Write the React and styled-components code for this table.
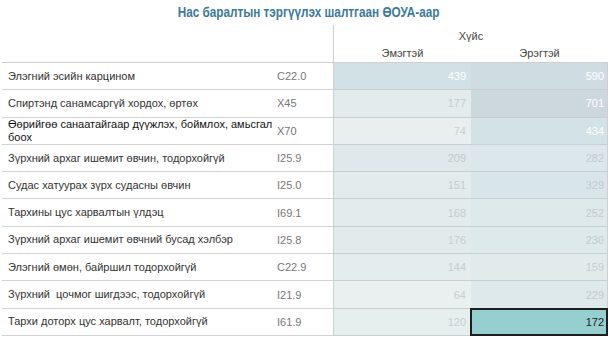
import React from "react";
import styled, { createGlobalStyle } from "styled-components";

const Global = createGlobalStyle`
  html, body { margin: 0; padding: 0; background: #fff; }
  body { font-family: "Liberation Sans", Arial, sans-serif; }
`;

const Page = styled.div`
  width: 611px;
  height: 338px;
  overflow: hidden;
  display: flex;
  flex-direction: column;
  padding-left: 2px;
  box-sizing: border-box;
`;

const Title = styled.div`
  height: 25px;
  display: flex;
  align-items: center;
  justify-content: center;
  padding-left: 4px;
  padding-bottom: 2px;
  box-sizing: border-box;
`;

const TitleText = styled.span`
  display: inline-block;
  font-weight: bold;
  font-size: 14.5px;
  color: #3d7a98;
  transform: scaleX(0.81);
  white-space: nowrap;
`;

const Table = styled.div`
  display: grid;
  grid-template-columns: 272px 59px 138px 137px;
  grid-template-rows: 19px 19px repeat(10, 27.3px);
  width: 606px;
  font-size: 11px;
  color: #333;
`;

const HeadBlank = styled.div`
  grid-column: 1 / 3;
  grid-row: 1 / 3;
  border-bottom: 1px solid #cfcfcf;
`;

const HeadGroup = styled.div`
  grid-column: 3 / 5;
  grid-row: 1;
  border-left: 1px solid #cfcfcf;
  display: flex;
  align-items: center;
  justify-content: center;
  padding-top: 2px;
  color: #444;
`;

const HeadCell = styled.div`
  border-left: ${(p) => (p.$first ? "1px solid #cfcfcf" : "none")};
  border-bottom: 1px solid #cfcfcf;
  display: flex;
  align-items: center;
  justify-content: center;
  color: #444;
  padding-bottom: 1px;
`;

const NameCell = styled.div`
  border-bottom: 1px solid #d3d3d3;
  display: flex;
  align-items: center;
  padding-left: 6px;
  line-height: 13px;
  color: ${(p) => (p.$dark ? "#111" : "#333")};
`;

const CodeCell = styled.div`
  border-bottom: 1px solid #d3d3d3;
  display: flex;
  align-items: center;
  padding-left: 3px;
  color: #777;
`;

const ValueCell = styled.div`
  position: relative;
  border-bottom: 1px solid #c9cfd1;
  border-left: ${(p) => (p.$first ? "1px solid #d0d0d0" : "none")};
  border-right: ${(p) => (p.$last ? "1px solid #d0d0d0" : "none")};
  background: ${(p) => p.$bg};
  color: ${(p) => p.$fg};
  display: flex;
  align-items: center;
  justify-content: flex-end;
  padding-right: ${(p) => (p.$last ? "3px" : "5px")};
`;

const Selected = styled.div`
  position: absolute;
  inset: -1px -1px -1px -1px;
  border: 2px solid #1e1e1e;
  background: #96cfcf;
  color: #222;
  display: flex;
  align-items: center;
  justify-content: flex-end;
  padding-right: 2px;
`;

const rows = [
  { name: "Элэгний эсийн карцином", code: "C22.0", f: [439, "#d1e1e6", "#fff"], m: [590, "#cfdde3", "#fff"] },
  { name: "Спиртэнд санамсаргүй хордох, өртөх", code: "X45", f: [177, "#e3ebec", "#c6cdcf"], m: [701, "#cdd7de", "#fff"] },
  { name: "Өөрийгөө санаатайгаар дүүжлэх, боймлох, амьсгал боох", code: "X70", dark: true, f: [74, "#e9efee", "#c9cfd0"], m: [434, "#d2e2e7", "#fff"] },
  { name: "Зүрхний архаг ишемит өвчин, тодорхойгүй", code: "I25.9", f: [209, "#dfe9eb", "#c3cbcd"], m: [282, "#dbe7ea", "#c3cbcd"] },
  { name: "Судас хатуурах зүрх судасны өвчин", code: "I25.0", f: [151, "#e3ebec", "#c6cdcf"], m: [329, "#d8e6ea", "#c3cbcd"] },
  { name: "Тархины цус харвалтын үлдэц", code: "I69.1", f: [168, "#e3ebec", "#c6cdcf"], m: [252, "#dde9eb", "#c3cbcd"] },
  { name: "Зүрхний архаг ишемит өвчний бусад хэлбэр", code: "I25.8", f: [176, "#e2eaec", "#c6cdcf"], m: [230, "#dde9eb", "#c3cbcd"] },
  { name: "Элэгний өмөн, байршил тодорхойгүй", code: "C22.9", f: [144, "#e4eced", "#c6cdcf"], m: [159, "#e2ebec", "#c6cdcf"] },
  { name: "Зүрхний  цочмог шигдээс, тодорхойгүй", code: "I21.9", f: [64, "#eaf0ef", "#c9cfd0"], m: [229, "#dde9eb", "#c3cbcd"] },
  { name: "Тархи доторх цус харвалт, тодорхойгүй", code: "I61.9", f: [120, "#e6eeee", "#c9cfd0"], m: [172, "#96cfcf", "#222"], sel: true },
];

export default function App() {
  return (
    <>
      <Global />
      <Page>
        <Title>
          <TitleText>Нас баралтын тэргүүлэх шалтгаан ӨОУА-аар</TitleText>
        </Title>
        <Table>
          <HeadBlank />
          <HeadGroup>Хүйс</HeadGroup>
          <HeadCell $first>Эмэгтэй</HeadCell>
          <HeadCell>Эрэгтэй</HeadCell>
          {rows.map((r) => (
            <React.Fragment key={r.code}>
              <NameCell $dark={r.dark}>{r.name.replace("  ", "\u00a0 ")}</NameCell>
              <CodeCell>{r.code}</CodeCell>
              <ValueCell $first $bg={r.f[1]} $fg={r.f[2]}>{r.f[0]}</ValueCell>
              <ValueCell $last $bg={r.m[1]} $fg={r.m[2]}>
                {r.sel ? <Selected>{r.m[0]}</Selected> : r.m[0]}
              </ValueCell>
            </React.Fragment>
          ))}
        </Table>
      </Page>
    </>
  );
}
